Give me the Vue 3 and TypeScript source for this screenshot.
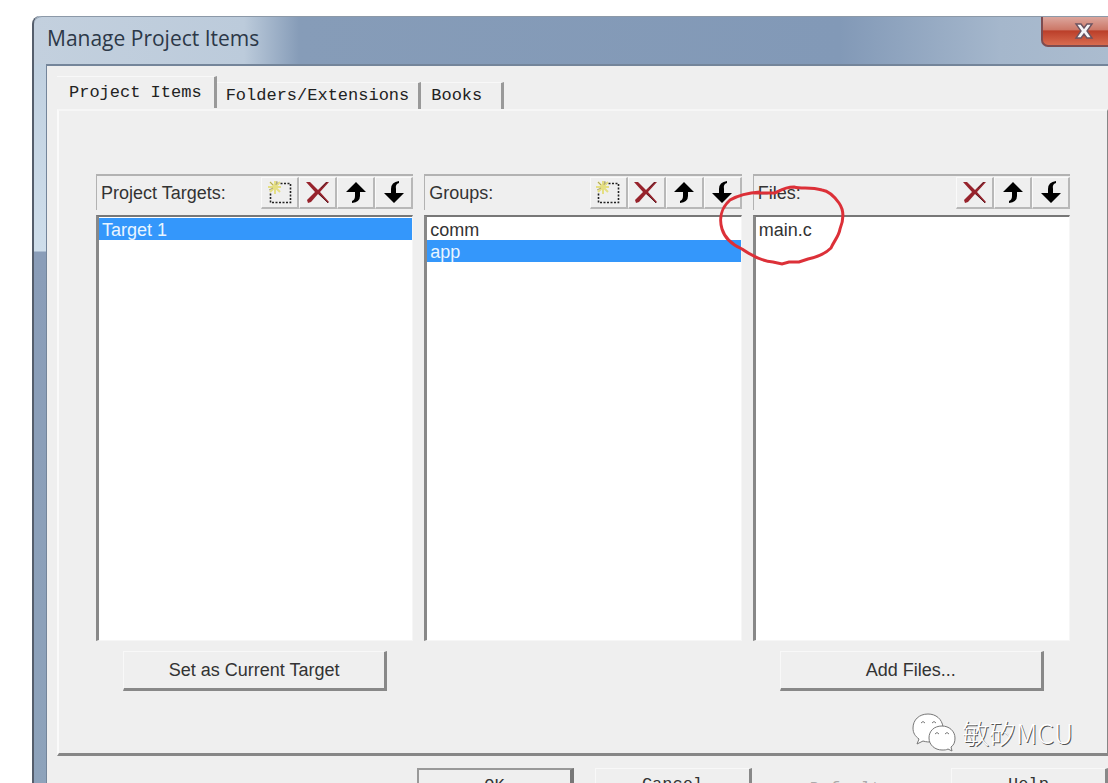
<script setup lang="ts">
import { ref } from 'vue'

type Tool = 'new' | 'delete' | 'up' | 'down'
interface Column {
  title: string
  tools: Tool[]
  items: string[]
  selected: number
  action?: string
}

const labels: Record<Tool, string> = { new: 'New', delete: 'Delete', up: 'Move up', down: 'Move down' }
const tabs = ['Project Items', 'Folders/Extensions', 'Books']
const activeTab = ref(0)
const columns = ref<Column[]>([
  { title: 'Project Targets:', tools: ['new', 'delete', 'up', 'down'], items: ['Target 1'], selected: 0, action: 'Set as Current Target' },
  { title: 'Groups:', tools: ['new', 'delete', 'up', 'down'], items: ['comm', 'app'], selected: 1 },
  { title: 'Files:', tools: ['delete', 'up', 'down'], items: ['main.c'], selected: -1, action: 'Add Files...' },
])
</script>

<template>
  <main class="page">
    <section class="window">
      <header class="titlebar">
        <h1>Manage Project Items</h1>
        <button class="close" aria-label="Close">
          <svg width="20" height="18" viewBox="0 0 20 18"><path d="M2 2h5l3 4 3-4h5l-5 7 5 7h-5l-3-4-3 4H2l5-7z" fill="#f5f5f8" stroke="#6b5360" stroke-width="1.4" /></svg>
        </button>
      </header>
      <div class="client">
        <nav class="tabs" role="tablist">
          <button v-for="(t, i) in tabs" :key="t" role="tab" class="tab" :class="{ active: i === activeTab }" :aria-selected="i === activeTab" @click="activeTab = i">{{ t }}</button>
        </nav>
        <div class="panel">
          <div class="columns">
            <section v-for="(c, ci) in columns" :key="c.title" class="column">
              <div class="head">
                <h2>{{ c.title }}</h2>
                <div class="tools">
                  <button v-for="t in c.tools" :key="t" class="tool" :aria-label="labels[t]">
                    <svg v-if="t === 'new'" width="26" height="26" viewBox="0 0 26 26">
                      <path d="M10 3.5H23.5V22.500H3.500V12" fill="none" stroke="#222" stroke-width="1.6" stroke-dasharray="2 1.5" />
                      <path d="M8 1v13M1 7h13M3 2l10 10M13 2L3 12" stroke="#e5df83" stroke-width="2" />
                      <path d="M3 2l3 3M10 1l-1 4M2 10l4-2" stroke="#aaa36b" stroke-width="1" />
                    </svg>
                    <svg v-else-if="t === 'delete'" width="26" height="26" viewBox="0 0 26 26">
                      <path d="M1 2l4 0 8 8 8-8 3 0-9 10 9 10-1 1-10-9-7 8-3 1-1-3 8-8z" fill="#97232c" />
                      <path d="M14 14l9 9M16 8l6-6" stroke="#5b2027" stroke-width="1" />
                    </svg>
                    <svg v-else-if="t === 'up'" width="26" height="26" viewBox="0 0 26 26">
                      <path d="M13 2l10 10h-6v4q0 6-8 7v-2q3-1 3-5v-4H3z" />
                    </svg>
                    <svg v-else width="26" height="26" viewBox="0 0 26 26">
                      <path d="M18 1v2q-4 1-3 6v4h8L13 23 3 13h7V9q0-7 8-8z" />
                    </svg>
                  </button>
                </div>
              </div>
              <ul class="list" role="listbox" :aria-label="c.title">
                <li v-for="(item, i) in c.items" :key="item" role="option" :aria-selected="i === c.selected" :class="{ selected: i === c.selected }" @click="c.selected = i">{{ item }}</li>
              </ul>
              <button v-if="c.action" class="button action">{{ c.action }}</button>
              <svg v-if="ci === 2" class="marker" width="128" height="86" viewBox="0 0 128 86">
                <path d="M42 9C28 10 19 13 12 17C3 25 1 36 4 46C7 56 15 62 24 66C34 73 44 78 55 79L64 81L71 79L81 79L90 76C99 74 108 70 113 65C116 58 121 53 122 46C126 36 126 27 121 20C116 13 111 8 104 7C92 4 84 6 76 4C67 4 63 7 57 10L36 10" />
              </svg>
            </section>
          </div>
          <div class="watermark">
            <svg width="44" height="40" viewBox="0 0 44 40">
              <path d="M16 1C7 1 1 7 1 15c0 5 2 8 6 11l-2 5 6-3c13 4 21-5 20-14C30 6 24 1 16 1z" />
              <path d="M30 13c-8 0-13 5-13 12s6 12 13 12c3 0 4 0 6-1l4 2-1-4c3-2 4-5 4-9 0-7-6-12-13-12z" />
              <path class="eyes" d="M9 10q2-3 4 0M20 10q2-3 4 0M23 21q2-3 4 0M33 21q2-3 4 0" />
            </svg>
            <span>敏矽MCU</span>
          </div>
        </div>
        <footer class="footer">
          <button class="button default">OK</button>
          <button class="button">Cancel</button>
          <button class="button flat" disabled>Defaults</button>
          <button class="button">Help</button>
        </footer>
      </div>
    </section>
  </main>
</template>

<style>
body { margin: 0; background: #fff; }
</style>

<style scoped>
* { box-sizing: border-box; }
button { font: inherit; color: inherit; padding: 0; border: 0; border-radius: 0; background: none; }
h1, h2 { margin: 0; font-weight: 400; }
svg { display: block; }
.page {
  height: 100vh;
  overflow: hidden;
  padding: 16px 0 0 32px;
  font: 18px/22px "Liberation Sans", Arial, sans-serif;
  color: #333;
}
.window {
  min-height: 100%;
  padding-left: 12px;
  border-left: 2px solid #555e6c;
  border-radius: 8px 0 0 0;
  background: linear-gradient(180deg, #bdcddd 0, #cfdeeb 235px, #8a9db8 236px, #8ea3bb 100%);
}
.titlebar {
  display: flex;
  justify-content: space-between;
  height: 48px;
  margin-left: -12px;
  padding-left: 13px;
  border-top: 1px solid #8c99a8;
  border-radius: 8px 0 0 0;
  background: linear-gradient(90deg, #c3d0de 0, #bccbdb 210px, #869cb8 265px, #8299b7 75%, #a5b7cc 90%, #abbccf 100%);
}
h1 { font: 21px/42px "Open Sans", "Noto Sans", sans-serif; color: #2c3848; }
.close {
  display: grid;
  place-items: center;
  width: 67px;
  height: 30px;
  padding-left: 16px;
  border: 1px solid #7d4c50;
  border-width: 0 0 2px 2px;
  border-radius: 0 0 0 7px;
  background: linear-gradient(#dca69d 0, #cc7868 45%, #bb3f2a 50%, #d86b4f 100%);
}
.client {
  border: 1px solid #74859a;
  border-width: 2px 0 0 1px;
  padding: 14px 0 0 10px;
  background: #efefef;
}
.tabs {
  display: flex;
  align-items: flex-end;
  height: 29px;
  font: 17px/20px "Liberation Mono", monospace;
  color: #222;
}
.tab { height: 27px; padding: 0 9px; border-right: 3px solid #999; border-top: 1px solid #f8f8f8; -webkit-text-stroke: 0 #222; }
.tab.active { height: 32px; align-self: flex-start; padding: 0 12px; margin-top: -4px; }
.tab:last-child { padding: 0 19px 0 10px; }
.panel {
  position: relative;
  padding: 63px 37px 0;
  height: 647px;
  border: 2px solid #868686;
  border-width: 2px 1px 3px 2px;
  border-top-color: #f6f6f6;
  border-left-color: #fafafa;
}
.columns { display: grid; grid-template-columns: repeat(3, 1fr); gap: 11px; }
.column { position: relative; display: flex; flex-direction: column; }
.head {
  display: flex;
  justify-content: space-between;
  align-items: center;
  height: 36px;
  margin-bottom: 5px;
  padding-left: 4px;
  border-top: 2px solid #b2b2b2;
  border-left: 1px solid #b2b2b2;
}
h2 { font-size: 18px; line-height: 22px; }
.tools { display: flex; }
.tool {
  display: grid;
  place-items: center;
  width: 38px;
  height: 32px;
  border: 1px solid #fafafa;
  border-right: 2px solid #b8b8b8;
  border-bottom: 2px solid #b8b8b8;
}
.list {
  height: 426px;
  margin: 0;
  padding: 1px 0 0;
  list-style: none;
  background: #fff;
  border: 1px solid #f6f6f6;
  border-top: 2px solid #777;
  border-left: 3px solid #888;
}
.list li { height: 22px; padding-left: 3px; line-height: 25px; }
.list .selected { background: #3497fb; color: #e9f5ff; }
.button {
  border: 1px solid #f8f8f8;
  border-right: 3px solid #888;
  border-bottom: 3px solid #888;
}
.action { height: 40px; margin: 10px 26px 0 27px; }
.marker { position: absolute; left: -35px; top: 9px; fill: none; stroke: #dc3038; stroke-width: 3; pointer-events: none; }
.watermark {
  position: absolute;
  right: 34px;
  bottom: 0;
  display: flex;
  align-items: center;
  gap: 6px;
  font: 300 27px/38px "Noto Sans CJK SC", sans-serif;
  color: #fff;
  text-shadow: 1px 1px 0 #555;
}
.watermark svg { fill: #fff; stroke: #777; stroke-width: 1; }
.watermark .eyes { fill: none; }
.footer {
  display: flex;
  justify-content: flex-end;
  gap: 21px;
  padding-top: 12px;
  font: 17px/20px "Liberation Mono", monospace;
}
.footer .button { width: 157px; height: 36px; flex: none; }
.footer .default { border: 2px solid #999; border-right: 4px solid #777; }
.footer .flat { padding-top: 8px; border-color: #efefef; color: #aaa; }
</style>
